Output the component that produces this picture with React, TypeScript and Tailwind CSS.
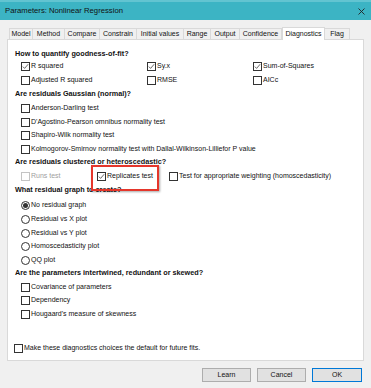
import React from 'react';

function Box({ checked, disabled }: { checked?: boolean; disabled?: boolean }) {
  return (
    <span
      className={
        'relative inline-block h-[9px] w-[9px] shrink-0 border bg-white ' +
        (disabled ? 'border-[#c4c4c4]' : 'border-[#333333]')
      }
    >
      {checked ? (
        <svg className="absolute left-0 top-0" width="7" height="7" viewBox="0 0 7 7">
          <path d="M0.8 3.6 L2.6 5.4 L6.2 1.2" fill="none" stroke="#444444" strokeWidth="0.8" />
        </svg>
      ) : null}
    </span>
  );
}

function Check({
  label,
  checked,
  disabled,
  className = '',
}: {
  label: string;
  checked?: boolean;
  disabled?: boolean;
  className?: string;
}) {
  return (
    <div className={'flex items-center gap-[1px] whitespace-nowrap ' + className}>
      <Box checked={checked} disabled={disabled} />
      <span className={disabled ? 'text-[#a0a0a0]' : 'text-[#111111]'}>{label}</span>
    </div>
  );
}

function Radio({ label, checked }: { label: string; checked?: boolean }) {
  return (
    <div className="flex items-center gap-[1px] whitespace-nowrap">
      <span className="flex h-[9px] w-[9px] shrink-0 items-center justify-center rounded-full border border-[#333333] bg-white">
        {checked ? <span className="h-[5px] w-[5px] rounded-full bg-[#333333]" /> : null}
      </span>
      <span>{label}</span>
    </div>
  );
}

function Heading({ text, h }: { text: string; h: string }) {
  return <div className={'flex items-center pl-[7px] text-[7.25px] font-bold ' + h}>{text}</div>;
}

const tabs = [
  { name: 'Model', w: 'w-[24px]' },
  { name: 'Method', w: 'w-[32px]' },
  { name: 'Compare', w: 'w-[35px]' },
  { name: 'Constrain', w: 'w-[37px]' },
  { name: 'Initial values', w: 'w-[47px]' },
  { name: 'Range', w: 'w-[27px]' },
  { name: 'Output', w: 'w-[29px]' },
  { name: 'Confidence', w: 'w-[42px]' },
  { name: 'Diagnostics', w: 'w-[43px]' },
  { name: 'Flag', w: 'w-[25px]' },
];

export default function App(): React.JSX.Element {
  return (
    <div className="relative flex h-[388px] w-[371px] flex-col overflow-hidden bg-[#f0f0f0] font-['Liberation_Sans',sans-serif] text-[7px] text-[#111111]">
      {/* title bar */}
      <div className="flex h-[20px] shrink-0 items-center justify-between border-t-2 border-[#62c4d1] bg-[#3cb4c4] pl-[5px] pr-[6px]">
        <span className="text-[7.7px] text-[#111111]">Parameters: Nonlinear Regression</span>
        <svg width="7" height="7" viewBox="0 0 7 7">
          <path d="M0.5 0.5 L6.5 6.5 M6.5 0.5 L0.5 6.5" stroke="#222222" strokeWidth="0.9" />
        </svg>
      </div>

      {/* tabs */}
      <div className="mt-[7px] flex h-[12px] items-end pl-[9px]">
        {tabs.map((t) =>
          t.name === 'Diagnostics' ? (
            <div
              key={t.name}
              className={
                'relative z-10 -mb-[1px] flex h-[13px] items-center justify-center border border-b-0 border-[#d9d9d9] bg-white ' +
                t.w
              }
            >
              {t.name}
            </div>
          ) : (
            <div
              key={t.name}
              className={
                'flex h-[11px] items-center justify-center border border-l-0 border-b-0 border-[#d9d9d9] bg-[#f0f0f0] first:border-l ' +
                t.w
              }
            >
              {t.name}
            </div>
          ),
        )}
      </div>

      {/* panel */}
      <div className="mx-[7px] flex h-[322px] flex-col border border-[#d9d9d9] bg-white pt-[8px]">
        <Heading text="How to quantify goodness-of-fit?" h="h-[12px]" />
        <div className="grid h-[13px] grid-cols-[126px_106px_1fr] items-center pl-[13px]">
          <Check label="R squared" checked />
          <Check label="Sy.x" checked />
          <Check label="Sum-of-Squares" checked />
        </div>
        <div className="grid h-[14px] grid-cols-[126px_106px_1fr] items-center pl-[13px]">
          <Check label="Adjusted R squared" />
          <Check label="RMSE" />
          <Check label="AICc" />
        </div>
        <Heading text="Are residuals Gaussian (normal)?" h="h-[15px]" />
        <Check label="Anderson-Darling test" className="h-[13px] pl-[13px]" />
        <Check label="D'Agostino-Pearson omnibus normality test" className="h-[14px] pl-[13px]" />
        <Check label="Shapiro-Wilk normality test" className="h-[13px] pl-[13px]" />
        <Check
          label="Kolmogorov-Smirnov normality test with Dallal-Wilkinson-Lilliefor P value"
          className="h-[14px] pl-[13px]"
        />
        <Heading text="Are residuals clustered or heteroscedastic?" h="h-[13px]" />
        <div className="grid h-[14px] grid-cols-[76px_72px_1fr] items-center pl-[13px]">
          <Check label="Runs test" disabled />
          <Check label="Replicates test" checked />
          <Check label="Test for appropriate weighting (homoscedasticity)" />
        </div>
        <Heading text="What residual graph to create?" h="h-[15px]" />
        <div className="flex flex-col pl-[13px]">
          <div className="flex h-[14px] items-center">
            <Radio label="No residual graph" checked />
          </div>
          <div className="flex h-[14px] items-center">
            <Radio label="Residual vs X plot" />
          </div>
          <div className="flex h-[14px] items-center">
            <Radio label="Residual vs Y plot" />
          </div>
          <div className="flex h-[13px] items-center">
            <Radio label="Homoscedasticity plot" />
          </div>
          <div className="flex h-[14px] items-center">
            <Radio label="QQ plot" />
          </div>
        </div>
        <Heading text="Are the parameters intertwined, redundant or skewed?" h="h-[13px]" />
        <Check label="Covariance of parameters" className="h-[14px] pl-[13px]" />
        <Check label="Dependency" className="h-[13px] pl-[13px]" />
        <Check label="Hougaard's measure of skewness" className="h-[14px] pl-[13px]" />
        <Check label="Make these diagnostics choices the default for future fits." className="mt-[20px] h-[14px] pl-[6px]" />
      </div>

      {/* buttons */}
      <div className="mt-[7px] flex justify-end gap-[6px] pr-[9px]">
        <button className="h-[14px] w-[49px] border border-[#adadad] bg-[#e1e1e1] text-[7px]">Learn</button>
        <button className="h-[14px] w-[49px] border border-[#adadad] bg-[#e1e1e1] text-[7px]">Cancel</button>
        <button className="h-[14px] w-[50px] border border-[#0078d7] bg-[#e1e1e1] text-[7px]">OK</button>
      </div>

      {/* red highlight */}
      <div className="absolute left-[91px] top-[165px] h-[26px] w-[68px] border-2 border-[#e5362b] shadow-[1px_1px_2px_rgba(0,0,0,0.35)]" />
    </div>
  );
}
